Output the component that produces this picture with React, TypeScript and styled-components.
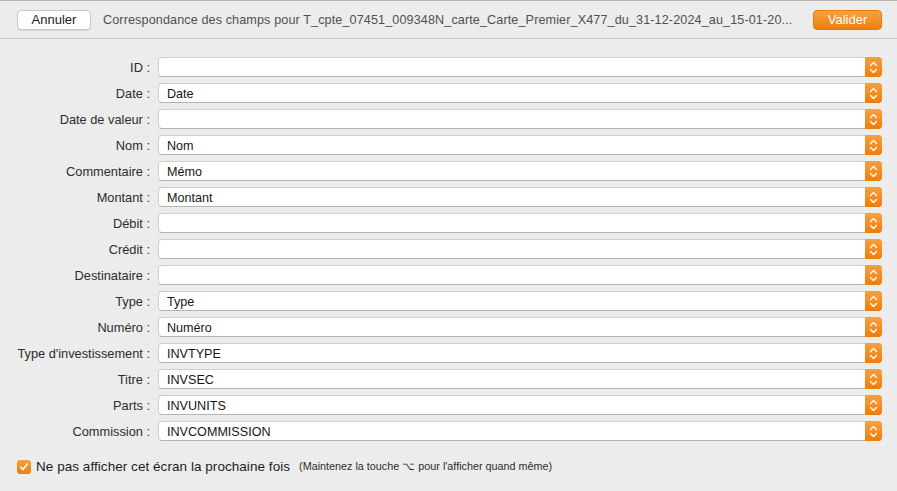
import React from "react";
import styled, { createGlobalStyle } from "styled-components";

const Global = createGlobalStyle`
  html, body { margin: 0; padding: 0; background: #ececec; }
  body { font-family: "Liberation Sans", Arial, sans-serif; -webkit-font-smoothing: antialiased; }
`;

const Window = styled.div`
  width: 897px;
  height: 491px;
  display: flex;
  flex-direction: column;
  background: #ececec;
  overflow: hidden;
`;

const TopBar = styled.div`
  height: 37px;
  flex: none;
  display: flex;
  align-items: center;
  gap: 12px;
  padding: 0 15px 0 17px;
  border-top: 1px solid #b9b9b9;
  border-bottom: 1px solid #cdcdcd;
  background: #ececec;
`;

const Button = styled.button<{ $primary?: boolean }>`
  height: 20px;
  flex: none;
  padding: 0;
  width: ${(p) => (p.$primary ? "69px" : "74px")};
  border-radius: 4px;
  font-family: inherit;
  font-size: 13px;
  line-height: 18px;
  cursor: default;
  border: 1px solid ${(p) => (p.$primary ? "#e27a0e" : "#c8c8c8")};
  color: ${(p) => (p.$primary ? "#fff" : "#1d1d1d")};
  background: ${(p) =>
    p.$primary ? "linear-gradient(#f6a243, #ef7f0c)" : "#fff"};
  box-shadow: ${(p) => (p.$primary ? "none" : "0 1px 0 rgba(0,0,0,0.08)")};
`;

const Title = styled.div`
  flex: 1;
  min-width: 0;
  white-space: nowrap;
  font-size: 12.6px;
  letter-spacing: 0.12px;
  color: #505050;
`;

const Form = styled.div`
  display: grid;
  grid-template-columns: 142px 1fr;
  column-gap: 8px;
  row-gap: 6px;
  padding: 18px 15px 0 8px;
`;

const Label = styled.div`
  height: 20px;
  line-height: 21px;
  text-align: right;
  font-size: 12.8px;
  color: #2c2c2c;
  white-space: nowrap;
`;

const Select = styled.div`
  height: 20px;
  box-sizing: border-box;
  display: flex;
  align-items: stretch;
  background: #fff;
  border: 1px solid #cfcfcf;
  border-bottom-color: #b3b3b3;
  border-radius: 4px;
`;

const Value = styled.div`
  flex: 1;
  padding-left: 8px;
  font-size: 12.6px;
  line-height: 20px;
  color: #161616;
`;

const Stepper = styled.div`
  width: 17px;
  margin: -1px -1px -1px 0;
  border-radius: 0 4px 4px 0;
  background: linear-gradient(#f6a040, #ef7d0a);
  display: flex;
  align-items: center;
  justify-content: center;
`;

const Footer = styled.div`
  display: flex;
  align-items: center;
  gap: 5px;
  padding: 18px 0 0 17px;
`;

const Check = styled.div`
  width: 14px;
  height: 14px;
  border-radius: 3px;
  background: linear-gradient(#f6a040, #ef7d0a);
  display: flex;
  align-items: center;
  justify-content: center;
  flex: none;
`;

const CheckText = styled.span`
  font-size: 13.5px;
  letter-spacing: 0.05px;
  color: #1d1d1d;
`;

const Hint = styled.span`
  font-size: 10.8px;
  color: #2c2c2c;
  margin-left: 4px;
`;

const rows: [string, string][] = [
  ["ID :", ""],
  ["Date :", "Date"],
  ["Date de valeur :", ""],
  ["Nom :", "Nom"],
  ["Commentaire :", "Mémo"],
  ["Montant :", "Montant"],
  ["Débit :", ""],
  ["Crédit :", ""],
  ["Destinataire :", ""],
  ["Type :", "Type"],
  ["Numéro :", "Numéro"],
  ["Type d'investissement :", "INVTYPE"],
  ["Titre :", "INVSEC"],
  ["Parts :", "INVUNITS"],
  ["Commission :", "INVCOMMISSION"],
];

const Chevrons = () => (
  <svg width="9" height="13" viewBox="0 0 9 13" fill="none">
    <path d="M1.5 4.5 L4.5 1.5 L7.5 4.5" stroke="#fff" strokeWidth="1.4" strokeLinecap="round" strokeLinejoin="round" />
    <path d="M1.5 8.5 L4.5 11.5 L7.5 8.5" stroke="#fff" strokeWidth="1.4" strokeLinecap="round" strokeLinejoin="round" />
  </svg>
);

export default function App() {
  return (
    <Window>
      <Global />
      <TopBar>
        <Button>Annuler</Button>
        <Title>
          Correspondance des champs pour
          T_cpte_07451_009348N_carte_Carte_Premier_X477_du_31-12-2024_au_15-01-20...
        </Title>
        <Button $primary>Valider</Button>
      </TopBar>
      <Form>
        {rows.map(([label, value]) => (
          <React.Fragment key={label}>
            <Label>{label}</Label>
            <Select>
              <Value>{value}</Value>
              <Stepper>
                <Chevrons />
              </Stepper>
            </Select>
          </React.Fragment>
        ))}
      </Form>
      <Footer>
        <Check>
          <svg width="10" height="10" viewBox="0 0 10 10" fill="none">
            <path d="M1.8 5.2 L4 7.6 L8.3 2" stroke="#fff" strokeWidth="1.6" strokeLinecap="round" strokeLinejoin="round" />
          </svg>
        </Check>
        <CheckText>Ne pas afficher cet écran la prochaine fois</CheckText>
        <Hint>(Maintenez la touche ⌥ pour l'afficher quand même)</Hint>
      </Footer>
    </Window>
  );
}
